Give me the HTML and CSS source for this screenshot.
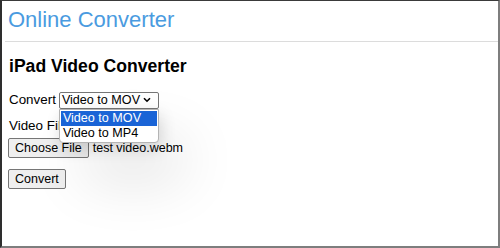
FILE: index.html
```html
<!DOCTYPE html>
<html lang="en">
<head>
    <meta charset="UTF-8">
    <meta name="viewport" content="width=device-width, initial-scale=1.0">
    <title>Online Converter</title>
    <link rel="stylesheet" href="styles.css">
</head>
<body>
    <div class="frame">
        <header class="topbar">
            <span class="brand">Online Converter</span>
        </header>

        <main class="content">
            <h2>iPad Video Converter</h2>

            <!-- Format picker, shown with its list open -->
            <div class="field">
                <span class="label">Convert</span>
                <div class="select-wrap">
                    <div class="select">
                        <span>Video to MOV</span>
                        <svg class="chevron" width="8" height="6" viewBox="0 0 8 6">
                            <path d="M1 1.2 L4 4.2 L7 1.2" fill="none" stroke="#000" stroke-width="1.6"/>
                        </svg>
                    </div>
                    <ul class="menu">
                        <li class="option active">Video to MOV</li>
                        <li class="option">Video to MP4</li>
                    </ul>
                </div>
            </div>

            <div class="field">
                <span class="label">Video File</span>
            </div>

            <div class="field file-row">
                <button class="btn">Choose File</button>
                <span class="file-name">test video.webm</span>
            </div>

            <div class="actions">
                <button class="btn">Convert</button>
            </div>
        </main>
    </div>
</body>
</html>
```

FILE: styles.css
```css
* {
    margin: 0;
    padding: 0;
    box-sizing: border-box;
}

body {
    font-family: "Liberation Sans", Arial, sans-serif;
    background: #fff;
    color: #000;
}

.frame {
    width: 500px;
    height: 248px;
    border-top: 1px solid #3a3a3a;
    border-left: 2px solid #2e2e2e;
    border-right: 2px solid #7e7e7e;
    border-bottom: 2px solid #7e7e7e;
    overflow: hidden;
}

.topbar {
    height: 41px;
    margin-left: 3px;
    padding: 6px 0 0 3px;
    border-bottom: 1px solid #dcdcdc;
}

.brand {
    font-size: 22px;
    line-height: 26px;
    color: #4a9be0;
}

.content {
    padding: 0 0 0 6px;
}

h2 {
    margin-top: 14px;
    margin-left: 1px;
    font-size: 17.6px;
    line-height: 20px;
    font-weight: bold;
}

.field {
    display: flex;
    align-items: center;
    gap: 3px;
    margin-left: 1px;
}

.field:nth-of-type(1) {
    margin-top: 15px;
}

.label {
    font-size: 13.4px;
    line-height: 18px;
}

.field + .field {
    margin-top: 8px;
}

.select-wrap {
    position: relative;
}

.select {
    width: 100px;
    height: 17px;
    display: flex;
    align-items: center;
    justify-content: space-between;
    padding: 0 7px 0 2px;
    border: 1px solid #767676;
    border-radius: 2px;
    font-size: 12.6px;
    background: #fff;
}

.chevron {
    display: block;
}

.menu {
    position: absolute;
    top: 17px;
    left: 0;
    width: 100px;
    list-style: none;
    padding: 1px;
    background: #fff;
    border: 1px solid #b4b4b4;
    border-radius: 0 0 4px 4px;
    box-shadow: 2px 6px 16px rgba(0, 0, 0, 0.14), 24px 34px 60px rgba(0, 0, 0, 0.14);
    z-index: 2;
}

.option {
    font-size: 12.6px;
    line-height: 15px;
    padding: 0 2px;
}

.option.active {
    background: #1a64d6;
    color: #fff;
}

.field.file-row {
    margin-top: 3px;
    margin-left: 0;
    gap: 4px;
}

.btn {
    font-family: "Liberation Sans", Arial, sans-serif;
    font-size: 12.5px;
    line-height: 16px;
    padding: 1px 6px;
    height: 20px;
    color: #000;
    background: #efefef;
    border: 1px solid #767676;
    border-radius: 2px;
}

.file-name {
    font-size: 12.5px;
}

.actions {
    margin-top: 11px;
}
```
